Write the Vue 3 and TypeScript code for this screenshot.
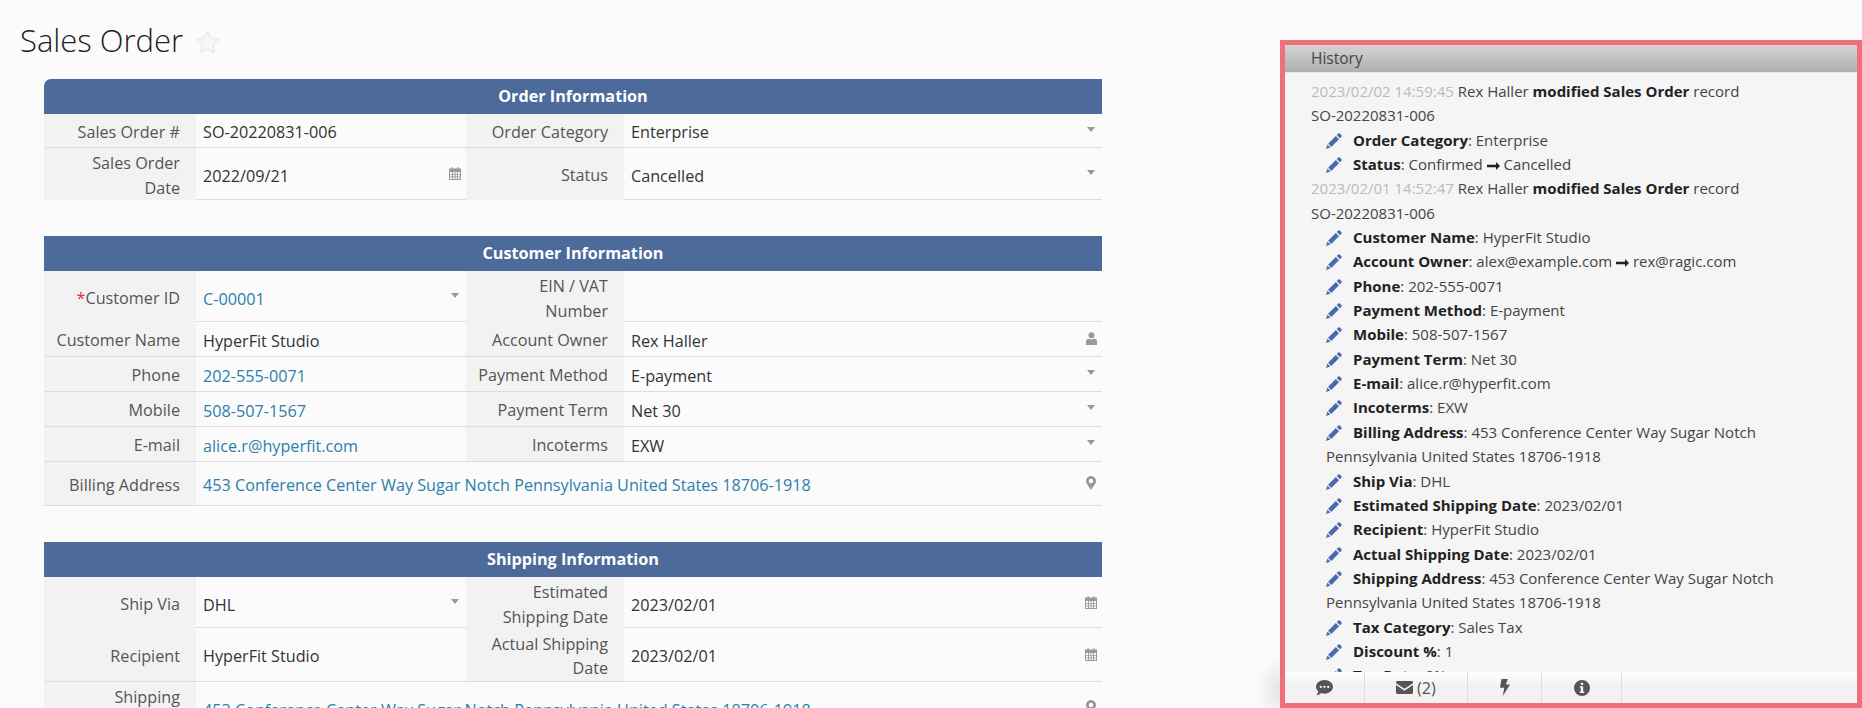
<script setup lang="ts">
interface Cell {
  label: string
  value?: string
  link?: boolean
  icon?: 'caret' | 'cal' | 'user' | 'pin'
  req?: boolean
  wide?: boolean
}
interface Row { h: number; cells: Cell[] }
interface Section { title: string; rounded?: boolean; rows: Row[] }

const sections: Section[] = [
  {
    title: 'Order Information',
    rounded: true,
    rows: [
      { h: 34, cells: [{ label: 'Sales Order #', value: 'SO-20220831-006' }, { label: 'Order Category', value: 'Enterprise', icon: 'caret' }] },
      { h: 52, cells: [{ label: 'Sales Order Date', value: '2022/09/21', icon: 'cal' }, { label: 'Status', value: 'Cancelled', icon: 'caret' }] }
    ]
  },
  {
    title: 'Customer Information',
    rows: [
      { h: 51, cells: [{ label: 'Customer ID', req: true, value: 'C-00001', link: true, icon: 'caret' }, { label: 'EIN / VAT Number' }] },
      { h: 35, cells: [{ label: 'Customer Name', value: 'HyperFit Studio' }, { label: 'Account Owner', value: 'Rex Haller', icon: 'user' }] },
      { h: 35, cells: [{ label: 'Phone', value: '202-555-0071', link: true }, { label: 'Payment Method', value: 'E-payment', icon: 'caret' }] },
      { h: 35, cells: [{ label: 'Mobile', value: '508-507-1567', link: true }, { label: 'Payment Term', value: 'Net 30', icon: 'caret' }] },
      { h: 35, cells: [{ label: 'E-mail', value: 'alice.r@hyperfit.com', link: true }, { label: 'Incoterms', value: 'EXW', icon: 'caret' }] },
      { h: 44, cells: [{ label: 'Billing Address', value: '453 Conference Center Way Sugar Notch Pennsylvania United States 18706-1918', link: true, icon: 'pin', wide: true }] }
    ]
  },
  {
    title: 'Shipping Information',
    rows: [
      { h: 51, cells: [{ label: 'Ship Via', value: 'DHL', icon: 'caret' }, { label: 'Estimated Shipping Date', value: '2023/02/01', icon: 'cal' }] },
      { h: 54, cells: [{ label: 'Recipient', value: 'HyperFit Studio' }, { label: 'Actual Shipping Date', value: '2023/02/01', icon: 'cal' }] },
      { h: 52, cells: [{ label: 'Shipping Address', value: '453 Conference Center Way Sugar Notch Pennsylvania United States 18706-1918', link: true, icon: 'pin', wide: true }] }
    ]
  }
]

interface Change { name: string; text?: string; from?: string; to?: string }
interface Entry { time: string; changes: Change[] }

const history: Entry[] = [
  {
    time: '2023/02/02 14:59:45',
    changes: [
      { name: 'Order Category', text: 'Enterprise' },
      { name: 'Status', from: 'Confirmed', to: 'Cancelled' }
    ]
  },
  {
    time: '2023/02/01 14:52:47',
    changes: [
      { name: 'Customer Name', text: 'HyperFit Studio' },
      { name: 'Account Owner', from: 'alex@example.com', to: 'rex@ragic.com' },
      { name: 'Phone', text: '202-555-0071' },
      { name: 'Payment Method', text: 'E-payment' },
      { name: 'Mobile', text: '508-507-1567' },
      { name: 'Payment Term', text: 'Net 30' },
      { name: 'E-mail', text: 'alice.r@hyperfit.com' },
      { name: 'Incoterms', text: 'EXW' },
      { name: 'Billing Address', text: '453 Conference Center Way Sugar Notch Pennsylvania United States 18706-1918' },
      { name: 'Ship Via', text: 'DHL' },
      { name: 'Estimated Shipping Date', text: '2023/02/01' },
      { name: 'Recipient', text: 'HyperFit Studio' },
      { name: 'Actual Shipping Date', text: '2023/02/01' },
      { name: 'Shipping Address', text: '453 Conference Center Way Sugar Notch Pennsylvania United States 18706-1918' },
      { name: 'Tax Category', text: 'Sales Tax' },
      { name: 'Discount %', text: '1' },
      { name: 'Tax Rate', text: '0%' }
    ]
  }
]
</script>

<template>
  <div class="page">
    <main class="main">
      <div class="title">
        <h1>Sales Order</h1>
        <svg class="star" viewBox="0 0 24 24" width="27" height="26"><path d="M12 2l3 6.600 7.200.9-5.300 5 1.400 7.200L12 18.200l-6.300 3.500 1.400-7.200-5.300-5L9 8.600z" fill="#f8f8f8" stroke="#ececec" stroke-width="1.400" stroke-linejoin="round"/></svg>
      </div>

      <section v-for="s in sections" :key="s.title" class="section">
        <div class="sec-head" :class="{ rounded: s.rounded }">{{ s.title }}</div>
        <div v-for="(r, i) in s.rows" :key="i" class="row" :style="{ height: r.h + 'px' }">
          <template v-for="c in r.cells" :key="c.label">
            <div class="label"><span><span v-if="c.req" class="req">*</span>{{ c.label }}</span></div>
            <div class="value" :class="{ wide: c.wide }">
              <span :class="{ link: c.link }">{{ c.value }}</span>
              <svg v-if="c.icon === 'caret'" class="ic caret" viewBox="0 0 8 5" width="8" height="5"><path d="M0 0h8L4 5z" fill="#999"/></svg>
              <svg v-else-if="c.icon === 'cal'" class="ic cal" viewBox="0 0 12 13" width="12" height="13"><path fill="#999" fill-rule="evenodd" d="M2.500 0h1.200v1.600h4.600V0h1.200v1.600H12V13H0V1.600h2.500zM1 5v1.900h2.100V5zm3 0v1.900h1.600V5zm2.500 0v1.900h1.600V5zm2.500 0v1.900h2V5zM1 7.700v1.800h2.100V7.700zm3 0v1.800h1.600V7.700zm2.500 0v1.800h1.600V7.700zm2.500 0v1.800h2V7.700zM1 10.300V12h2.100v-1.700zm3 0V12h1.600v-1.700zm2.500 0V12h1.600v-1.700zm2.500 0V12h2v-1.700z"/></svg>
              <svg v-else-if="c.icon === 'user'" class="ic user" viewBox="0 0 11 13" width="11" height="13"><circle cx="5.500" cy="3.200" r="3" fill="#999"/><path d="M0 13v-3.200C0 7.800 1.500 6.800 3 6.800c.7.500 1.500.8 2.500.8s1.800-.3 2.500-.8c1.500 0 3 1 3 3V13z" fill="#999"/></svg>
              <svg v-else-if="c.icon === 'pin'" class="ic pin" viewBox="0 0 10 14" width="10" height="14"><path fill="#999" fill-rule="evenodd" d="M5 0a5 5 0 0 1 5 5c0 1.200-.4 1.900-.8 2.700L5 14 .8 7.700C.4 6.900 0 6.200 0 5a5 5 0 0 1 5-5zm0 2.800a2.200 2.200 0 1 0 0 4.400 2.200 2.200 0 0 0 0-4.400z"/></svg>
            </div>
          </template>
        </div>
      </section>
    </main>

    <aside class="panel">
      <div class="panel-head">History</div>
      <div class="log">
        <div v-for="e in history" :key="e.time" class="entry">
          <div class="stamp"><span class="time">{{ e.time }}</span> Rex Haller <b>modified Sales Order</b> record <span class="nb">SO-20220831-006</span></div>
          <div v-for="c in e.changes" :key="c.name" class="change">
            <svg class="pencil" viewBox="0 0 16 16" width="16" height="16"><path fill="#4a6ab0" d="M12.100.7c.5-.5 1.300-.5 1.800 0l1.400 1.400c.5.500.5 1.300 0 1.800L13.900 5.300 10.700 2.100zM9.800 3l3.200 3.200-7.700 7.700-3.200-3.200zM1.400 11.600l3 3L0 16z"/></svg>
            <b>{{ c.name }}</b>:
            <template v-if="c.from">{{ c.from }}
              <svg class="arrow" viewBox="0 0 13 8" width="13" height="8"><path fill="#222" d="M0 2.800h9V0l4 4-4 4V5.200H0z"/></svg>
              {{ c.to }}</template>
            <template v-else>{{ c.text }}</template>
          </div>
        </div>
      </div>
      <div class="tabs">
        <div class="tab t1"><svg viewBox="0 0 16 15" width="17" height="16"><path fill="#555" fill-rule="evenodd" d="M8 0c4.400 0 8 2.900 8 6.400s-3.600 6.400-8 6.400c-1 0-2-.2-2.900-.5C4.100 13.200 2.300 14.400 0 14.400c1.200-1.200 1.900-2.600 2.200-3.700C.8 9.600 0 8.100 0 6.400 0 2.900 3.600 0 8 0zM4.500 5.300a1.100 1.100 0 1 0 0 2.200 1.100 1.100 0 0 0 0-2.200zm3.500 0a1.100 1.100 0 1 0 0 2.200 1.100 1.100 0 0 0 0-2.200zm3.500 0a1.100 1.100 0 1 0 0 2.200 1.100 1.100 0 0 0 0-2.200z"/></svg></div>
        <div class="tab t2"><svg viewBox="0 0 17 13" width="17" height="13"><path fill="#555" d="M1.500 0h14C16.300 0 17 .7 17 1.500c0 .4-.2.800-.5 1L8.500 7.800.5 2.500C.2 2.300 0 1.900 0 1.500 0 .7.700 0 1.500 0zM0 4.100l8.500 5.600L17 4.100v7.400c0 .8-.7 1.500-1.500 1.500h-14C.7 13 0 12.300 0 11.500z"/></svg><span>(2)</span></div>
        <div class="tab t3"><svg viewBox="0 0 10 17" width="10" height="17"><path fill="#555" d="M1.500 0h6.400L5.800 5.500H10L2.800 17l1.500-8.300H0z"/></svg></div>
        <div class="tab t4"><svg viewBox="0 0 16 16" width="16" height="16"><path fill="#555" fill-rule="evenodd" d="M8 0a8 8 0 1 1 0 16A8 8 0 0 1 8 0zM6.800 2.700v2.200h2.400V2.700zM5.800 6.300v1.500h1v3.600h-1v1.500h4.400v-1.500h-1V6.300z"/></svg></div>
      </div>
    </aside>
  </div>
</template>

<style>
html, body { margin: 0; background: #fafafa; }
</style>

<style scoped>
.page {
  display: flex;
  width: 1862px;
  height: 708px;
  overflow: hidden;
  background: #fbfbfb;
  font-family: "Open Sans", sans-serif;
  font-size: 16.2px;
  color: #222;
}
.main { width: 1280px; flex: none; }
.title {
  display: flex;
  align-items: center;
  height: 79px;
  padding: 0 0 0 20px;
  box-sizing: border-box;
}
h1 {
  margin: 0;
  font-size: 31px;
  font-weight: 300;
  color: #222;
  line-height: 86px;
}
.star { margin-left: 11px; margin-top: 5px; }
.section { width: 1058px; margin-left: 44px; margin-bottom: 36px; }
.sec-head {
  height: 35px;
  line-height: 34px;
  background: #4c6a9a;
  color: #fff;
  font-weight: 700;
  text-align: center;
}
.sec-head.rounded { border-top-left-radius: 7px; }
.row {
  display: grid;
  grid-template-columns: 152px 270px 158px 478px;
  box-sizing: border-box;
  border-bottom: 1px solid #ddd;
}
.label {
  display: flex;
  align-items: center;
  justify-content: flex-end;
  text-align: right;
  padding: 3px 16px 0 10px;
  background: #f2f2f2;
  color: #555;
  line-height: 24.500px;
}
.value {
  position: relative;
  display: flex;
  align-items: center;
  padding: 3px 0 0 7px;
  color: #333;
}
.value.wide { grid-column: 2 / 5; }
.link { color: #2b80ac; }
.req { color: #d33; }
.ic { position: absolute; right: 7px; top: 50%; }
.caret { margin-top: -4px; }
.cal { right: 5px; margin-top: -7px; }
.user { right: 5px; margin-top: -7px; }
.pin { right: 6px; margin-top: -8px; }

.panel {
  position: relative;
  flex: 1;
  margin-top: 40px;
  border: 5px solid #f0707a;
  box-sizing: border-box;
  background: #f5f5f5;
  display: flex;
  flex-direction: column;
  font-size: 15px;
}
.panel::before {
  content: "";
  position: absolute;
  left: -30px;
  bottom: -5px;
  width: 25px;
  height: 60px;
  background: radial-gradient(ellipse 25px 34px at 100% 70%, rgba(0, 0, 0, 0.09), rgba(0, 0, 0, 0));
}
.panel-head {
  height: 27px;
  line-height: 26px;
  padding-left: 26px;
  flex: none;
  background: linear-gradient(#d4d4d4, #aeaeae);
  border-bottom: 1px solid #e6e6e6;
  font-size: 15.500px;
  color: #444;
}
.log {
  flex: 1;
  overflow: hidden;
  padding: 6px 27px 0 26px;
  line-height: 24.350px;
  color: #444;
}
.time { color: #bbb; }
.nb { white-space: nowrap; }
.change { padding-left: 15px; }
.change b, .stamp b { color: #222; font-weight: 700; }
.pencil { display: inline-block; vertical-align: -3px; margin-right: 11px; }
.arrow { vertical-align: 0; }
.tabs {
  position: absolute;
  left: 0;
  right: 0;
  bottom: 0;
  height: 31px;
  display: flex;
  background: linear-gradient(#ffffff, #f2f2f2 40%, #f2f2f2);
  color: #555;
  font-size: 16.200px;
}
.tab {
  display: flex;
  align-items: center;
  justify-content: center;
  gap: 4px;
  box-sizing: border-box;
  border-right: 1px solid #ddd;
}
.t1 { width: 80px; }
.t2 { width: 103px; }
.t3 { width: 74px; }
.t4 { width: 80px; }
</style>
